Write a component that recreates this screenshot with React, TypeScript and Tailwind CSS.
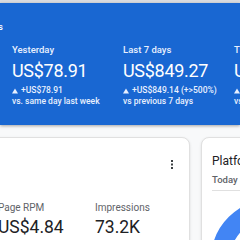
import type { ReactNode } from "react";

interface Stat {
  label: string;
  value: string;
  delta: string;
  compare: string;
}

const stats: Stat[] = [
  { label: "Yesterday", value: "US$78.91", delta: "+US$78.91", compare: "vs. same day last week" },
  { label: "Last 7 days", value: "US$849.27", delta: "+US$849.14 (+>500%)", compare: "vs previous 7 days" },
  { label: "This month", value: "US$927.40", delta: "+US$927.40", compare: "vs same period last year" },
];

function UpIcon() {
  return (
    <svg width="6" height="6" viewBox="0 0 6 6" className="mr-[3px] shrink-0" aria-hidden="true">
      <path d="M3 0.5L6 5.5H0z" fill="currentColor" />
    </svg>
  );
}

function StatColumn({ stat }: { stat: Stat }) {
  return (
    <div className="w-[111px] shrink-0 whitespace-nowrap">
      <div className="text-[9.5px] leading-[12px] font-medium text-[#e8f0fe]">{stat.label}</div>
      <div className="mt-[4px] text-[18px] leading-[22px] tracking-[-0.3px] text-white">{stat.value}</div>
      <div className="mt-[3px] flex items-center text-[8.5px] leading-[11px] font-medium text-[#e8f0fe]">
        <UpIcon />
        {stat.delta}
      </div>
      <div className="text-[8.5px] leading-[10px] font-medium text-[#e8f0fe]">{stat.compare}</div>
    </div>
  );
}

function Metric({ label, value }: { label: string; value: ReactNode }) {
  return (
    <div className="w-[97px] shrink-0 whitespace-nowrap">
      <div className="text-[10px] leading-[13px] text-[#5f6368]">{label}</div>
      <div className="mt-[3px] text-[17.5px] leading-[21px] text-[#202124]">{value}</div>
    </div>
  );
}

export default function App() {
  return (
    <div
      className="w-[240px] h-[240px] overflow-hidden bg-[#f8f9fa]"
      style={{ fontFamily: "Roboto, 'Liberation Sans', sans-serif" }}
    >
      <div className="h-[3px] bg-[#dadce0]" />

      {/* Blue summary header */}
      <div className="relative h-[122px] bg-[#1967d2] pt-[18px] shadow-[0_1px_3px_rgba(0,0,0,0.35)]">
        <div className="-ml-[15px] text-[9.5px] leading-[12px] font-medium text-white">ings</div>
        <div className="mt-[11px] flex pl-[12px]">
          {stats.map((s) => (
            <StatColumn key={s.label} stat={s} />
          ))}
        </div>
      </div>

      {/* Cards */}
      <div className="flex gap-[11px] pt-[12px]">
        <div className="-ml-[14px] w-[204px] h-[140px] shrink-0 rounded-lg border border-[#e0e0e0] bg-white pl-[11px] pr-[15px] pt-[22px] shadow-sm">
          <div className="flex justify-end">
            <svg width="4" height="9" viewBox="0 0 4 9" aria-hidden="true">
              <rect x="1" y="0" width="2" height="2" fill="#3c4043" />
              <rect x="1" y="3.5" width="2" height="2" fill="#3c4043" />
              <rect x="1" y="7" width="2" height="2" fill="#3c4043" />
            </svg>
          </div>
          <div className="mt-[32px] flex">
            <Metric label="Page RPM" value="US$4.84" />
            <Metric label="Impressions" value="73.2K" />
          </div>
        </div>

        <div className="w-[160px] h-[140px] shrink-0 rounded-lg border border-[#e0e0e0] bg-white pl-[10px] pt-[16px] shadow-sm">
          <div className="text-[12px] leading-[15px] text-[#202124] whitespace-nowrap">Platform earnings</div>
          <div className="mt-[5px] text-[9.5px] leading-[12px] font-medium text-[#5f6368] whitespace-nowrap">
            Today so far
          </div>
          <div className="mt-[4px] border-t border-[#e0e0e0]" />
          <svg className="mt-[8px] -ml-[1px]" width="122" height="122" viewBox="0 0 122 122" aria-hidden="true">
            <circle cx="61" cy="61" r="51.5" fill="none" stroke="#4285f4" strokeWidth="19" />
          </svg>
        </div>
      </div>
    </div>
  );
}
